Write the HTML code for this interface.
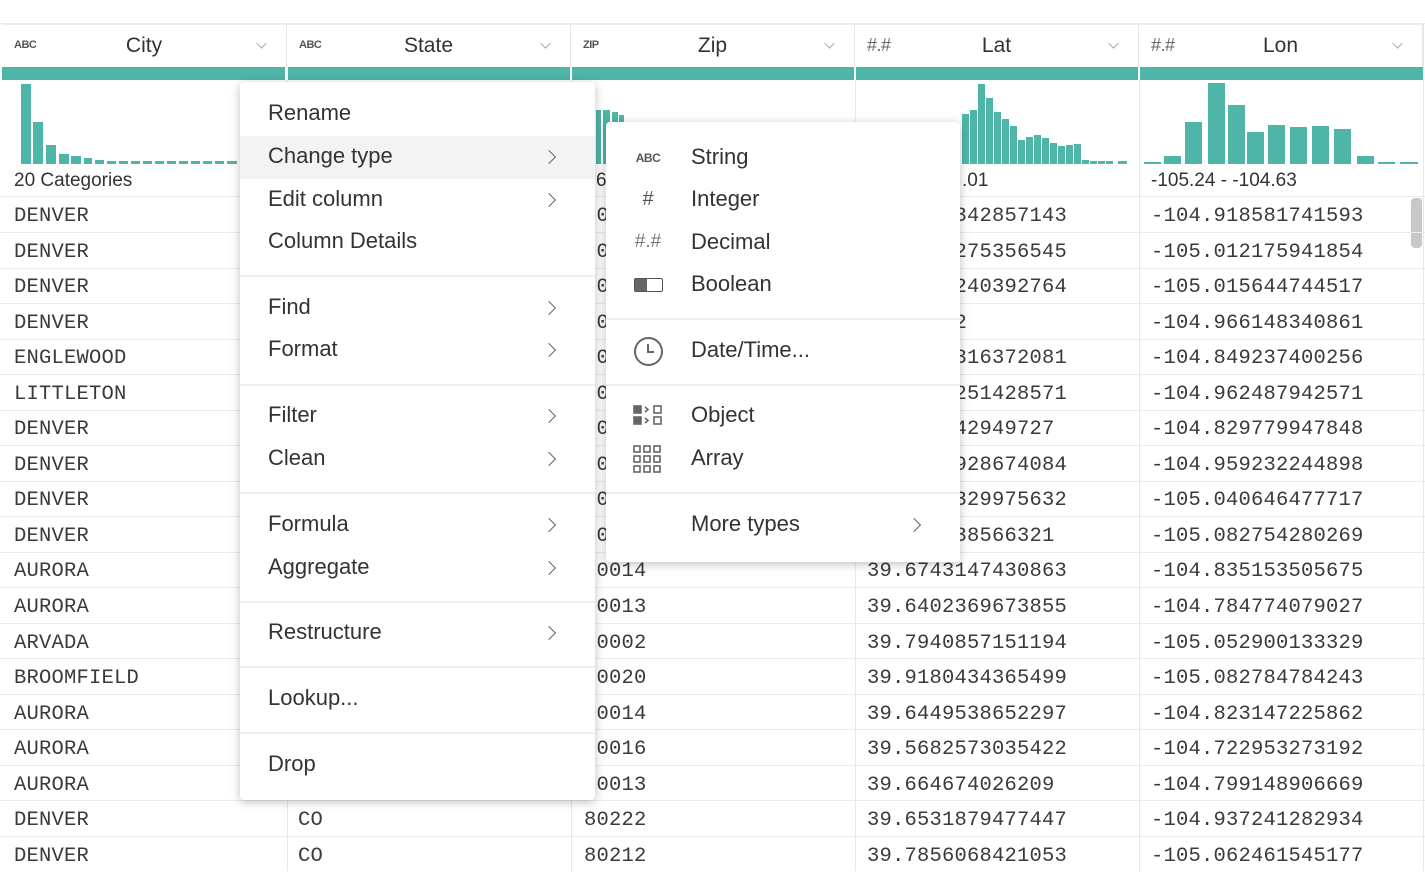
<!DOCTYPE html>
<html><head><meta charset="utf-8"><style>
*{margin:0;padding:0;box-sizing:border-box}
body{width:1425px;height:871px;overflow:hidden;background:#fff;font-family:"Liberation Sans",sans-serif;color:#333;position:relative}
.a{position:absolute}
.hd{position:absolute;top:24px;height:43px;border-right:1px solid #e6e6e6;border-top:1px solid #eee}
.hd .t{position:absolute;left:12px;top:14px;font-size:11px;font-weight:bold;color:#555;letter-spacing:-0.5px}
.hd .n{position:absolute;left:0;right:0;text-align:center;top:9px;font-size:21px;color:#333}
.hd .c{position:absolute;right:20px;top:14px;width:9px;height:9px;border-right:1.5px solid #999;border-bottom:1.5px solid #999;transform:rotate(45deg) scale(0.8,0.8)}
.bar{position:absolute;top:67px;height:13px;background:#4fb5a9}
.vl{position:absolute;top:80px;bottom:0;width:1px;background:#e8e8e8}
.hl{position:absolute;left:0;width:1425px;height:1px;background:#ececec}
.cell{position:absolute;font-family:"Liberation Mono",monospace;font-size:20.5px;color:#3a3a3a;white-space:pre;letter-spacing:0.2px}
.menu{position:absolute;background:#fff;border-radius:4px;box-shadow:0 2px 10px rgba(0,0,0,0.25)}
.mi{position:absolute;left:28px;font-size:22px;color:#333;white-space:nowrap}
.chev{position:absolute;width:10px;height:10px;border-right:1.6px solid #666;border-top:1.6px solid #666;transform:rotate(45deg)}
.sep{position:absolute;left:0;right:0;height:2px;background:#eee}
.ic{position:absolute;color:#555;text-align:center;width:40px}
</style></head><body>
<div class="a" style="left:0;top:0;width:1425px;height:24px;background:#fff;border-bottom:1px solid #eee"></div>

<div class="hd" style="left:2px;width:285px"><span class="t">ABC</span><span class="n">City</span><span class="c"></span></div>
<div class="hd" style="left:287px;width:284px"><span class="t">ABC</span><span class="n">State</span><span class="c"></span></div>
<div class="hd" style="left:571px;width:284px"><span class="t">ZIP</span><span class="n">Zip</span><span class="c"></span></div>
<div class="hd" style="left:855px;width:284px"><span class="t" style="font-size:18px;font-weight:normal;top:10px;color:#666">#.#</span><span class="n">Lat</span><span class="c"></span></div>
<div class="hd" style="left:1139px;width:284px"><span class="t" style="font-size:18px;font-weight:normal;top:10px;color:#666">#.#</span><span class="n">Lon</span><span class="c"></span></div>
<div class="bar" style="left:2px;width:283px"></div>
<div class="bar" style="left:288px;width:282px"></div>
<div class="bar" style="left:572px;width:282px"></div>
<div class="bar" style="left:856px;width:282px"></div>
<div class="bar" style="left:1140px;width:283px"></div>

<div class="vl" style="left:287px"></div><div class="vl" style="left:571px"></div><div class="vl" style="left:855px"></div><div class="vl" style="left:1139px"></div><div class="vl" style="left:1423px;top:24px"></div>

<svg class="a" style="left:0;top:80px" width="1425" height="90">
<g fill="#4fb5a9">
<rect x="21" y="4" width="10" height="80"/><rect x="33" y="42" width="10" height="42"/><rect x="46" y="65" width="10" height="19"/><rect x="59" y="74" width="10" height="10"/><rect x="71" y="76" width="10" height="8"/><rect x="84" y="78" width="8" height="6"/>
<rect x="95" y="80" width="9" height="4"/><rect x="107" y="81" width="9" height="3"/><rect x="119" y="81" width="9" height="3"/><rect x="131" y="81" width="9" height="3"/><rect x="143" y="81" width="9" height="3"/><rect x="155" y="81" width="9" height="3"/><rect x="167" y="81" width="9" height="3"/><rect x="179" y="81" width="9" height="3"/><rect x="191" y="81" width="9" height="3"/><rect x="203" y="81" width="9" height="3"/><rect x="215" y="81" width="9" height="3"/><rect x="227" y="81" width="10" height="3"/>
<rect x="596" y="30" width="5" height="54"/><rect x="603" y="30" width="7" height="54"/><rect x="612" y="32" width="6" height="10"/><rect x="619" y="35" width="5" height="7"/>
<rect x="962" y="34" width="7" height="50"/><rect x="970" y="30" width="7" height="54"/><rect x="978" y="4" width="7" height="80"/><rect x="986" y="18" width="7" height="66"/><rect x="994" y="32" width="7" height="52"/><rect x="1002" y="39" width="7" height="45"/><rect x="1010" y="46" width="7" height="38"/><rect x="1018" y="60" width="7" height="24"/><rect x="1026" y="57" width="7" height="27"/><rect x="1034" y="55" width="7" height="29"/><rect x="1042" y="58" width="7" height="26"/><rect x="1050" y="63" width="7" height="21"/><rect x="1058" y="66" width="7" height="18"/><rect x="1066" y="65" width="7" height="19"/><rect x="1074" y="64" width="7" height="20"/><rect x="1082" y="80" width="7" height="4"/><rect x="1090" y="81" width="7" height="3"/><rect x="1098" y="81" width="7" height="3"/><rect x="1106" y="81" width="7" height="3"/><rect x="1118" y="81" width="9" height="3"/>
<rect x="1144" y="82" width="17" height="2"/><rect x="1164" y="76" width="17" height="8"/><rect x="1185" y="42" width="17" height="42"/><rect x="1208" y="3" width="17" height="81"/><rect x="1228" y="25" width="17" height="59"/><rect x="1247" y="52" width="17" height="32"/><rect x="1268" y="45" width="17" height="39"/><rect x="1290" y="47" width="17" height="37"/><rect x="1312" y="46" width="17" height="38"/><rect x="1334" y="49" width="17" height="35"/><rect x="1357" y="76" width="17" height="8"/><rect x="1378" y="82" width="17" height="2"/><rect x="1400" y="82" width="18" height="2"/>
</g></svg>
<div class="a" style="left:14px;top:170px;font-size:19px;color:#333">20 Categories</div>
<div class="a" style="left:596px;top:170px;font-size:19px;color:#333">6</div>
<div class="a" style="left:962px;top:170px;font-size:19px;color:#333">.01</div>
<div class="a" style="left:1151px;top:170px;font-size:19px;color:#333">-105.24 - -104.63</div>

<div class="hl" style="top:196px"></div>
<div class="a" style="left:1411px;top:198px;width:11px;height:50px;background:#c8c8c8;border-radius:4px"></div>

<div class="cell" style="left:14px;top:199px;line-height:35.55px">DENVER
DENVER
DENVER
DENVER
ENGLEWOOD
LITTLETON
DENVER
DENVER
DENVER
DENVER
AURORA
AURORA
ARVADA
BROOMFIELD
AURORA
AURORA
AURORA
DENVER
DENVER</div>
<div class="cell" style="left:298px;top:199px;line-height:35.55px">CO
CO
CO
CO
CO
CO
CO
CO
CO
CO
CO
CO
CO
CO
CO
CO
CO
CO
CO</div>
<div class="cell" style="left:584px;top:199px;line-height:35.55px">80206
80205
80203
80209
80112
80120
80206
80204
80209
80203
80014
80013
80002
80020
80014
80016
80013
80222
80212</div>
<div class="cell" style="left:867px;top:199px;line-height:35.55px">39.7213342857143
39.7122275356545
39.7183240392764
39.73622
39.5816316372081
39.6123251428571
39.673542949727
39.7399928674084
39.7088329975632
39.756638566321
39.6743147430863
39.6402369673855
39.7940857151194
39.9180434365499
39.6449538652297
39.5682573035422
39.664674026209
39.6531879477447
39.7856068421053</div>
<div class="cell" style="left:1151px;top:199px;line-height:35.55px">-104.918581741593
-105.012175941854
-105.015644744517
-104.966148340861
-104.849237400256
-104.962487942571
-104.829779947848
-104.959232244898
-105.040646477717
-105.082754280269
-104.835153505675
-104.784774079027
-105.052900133329
-105.082784784243
-104.823147225862
-104.722953273192
-104.799148906669
-104.937241282934
-105.062461545177</div>
<div class="hl" style="top:232px"></div><div class="hl" style="top:268px"></div><div class="hl" style="top:303px"></div><div class="hl" style="top:339px"></div><div class="hl" style="top:374px"></div><div class="hl" style="top:410px"></div><div class="hl" style="top:445px"></div><div class="hl" style="top:481px"></div><div class="hl" style="top:516px"></div><div class="hl" style="top:552px"></div><div class="hl" style="top:587px"></div><div class="hl" style="top:623px"></div><div class="hl" style="top:658px"></div><div class="hl" style="top:694px"></div><div class="hl" style="top:729px"></div><div class="hl" style="top:765px"></div><div class="hl" style="top:800px"></div><div class="hl" style="top:836px"></div>

<div class="menu" style="left:240px;top:82px;width:355px;height:718px">
<div class="a" style="left:0;top:54px;width:355px;height:43px;background:#f3f3f3"></div>
<div class="mi" style="top:18px">Rename</div>
<div class="mi" style="top:61px">Change type</div><div class="chev" style="left:304px;top:70px"></div>
<div class="mi" style="top:104px">Edit column</div><div class="chev" style="left:304px;top:113px"></div>
<div class="mi" style="top:146px">Column Details</div>
<div class="sep" style="top:193px"></div>
<div class="mi" style="top:212px">Find</div><div class="chev" style="left:304px;top:221px"></div>
<div class="mi" style="top:254px">Format</div><div class="chev" style="left:304px;top:263px"></div>
<div class="sep" style="top:302px"></div>
<div class="mi" style="top:320px">Filter</div><div class="chev" style="left:304px;top:329px"></div>
<div class="mi" style="top:363px">Clean</div><div class="chev" style="left:304px;top:372px"></div>
<div class="sep" style="top:410px"></div>
<div class="mi" style="top:429px">Formula</div><div class="chev" style="left:304px;top:438px"></div>
<div class="mi" style="top:472px">Aggregate</div><div class="chev" style="left:304px;top:481px"></div>
<div class="sep" style="top:519px"></div>
<div class="mi" style="top:537px">Restructure</div><div class="chev" style="left:304px;top:546px"></div>
<div class="sep" style="top:584px"></div>
<div class="mi" style="top:603px">Lookup...</div>
<div class="sep" style="top:650px"></div>
<div class="mi" style="top:669px">Drop</div>
</div>

<div class="menu" style="left:606px;top:122px;width:354px;height:440px">
<div class="ic" style="left:22px;top:29px;font-size:12px;font-weight:bold;letter-spacing:-0.5px">ABC</div>
<div class="mi" style="left:85px;top:22px">String</div>
<div class="ic" style="left:22px;top:66px;font-size:20px">#</div>
<div class="mi" style="left:85px;top:64px">Integer</div>
<div class="ic" style="left:22px;top:109px;font-size:19px;color:#777">#.#</div>
<div class="mi" style="left:85px;top:107px">Decimal</div>
<div class="a" style="left:28px;top:156px;width:29px;height:14px;border:1.5px solid #555;border-radius:2px"><div style="width:12px;height:100%;background:#666"></div></div>
<div class="mi" style="left:85px;top:149px">Boolean</div>
<div class="sep" style="top:196px"></div>
<div class="a" style="left:28px;top:215px;width:29px;height:29px;border:2px solid #666;border-radius:50%"><div style="position:absolute;left:11px;top:5px;width:7px;height:9px;border-left:2px solid #666;border-bottom:2px solid #666"></div></div>
<div class="mi" style="left:85px;top:215px">Date/Time...</div>
<div class="sep" style="top:262px"></div>
<svg class="a" style="left:27px;top:283px" width="32" height="70" fill="none" stroke="#666" stroke-width="1.6">
<rect x="1" y="1" width="7" height="7" fill="#666"/><rect x="1" y="12" width="7" height="7" fill="#666"/><path d="M12 2l3 2.5-3 2.5M12 13l3 2.5-3 2.5"/><rect x="21" y="1" width="7" height="7"/><rect x="21" y="12" width="7" height="7"/>
<rect x="1" y="41" width="6" height="6"/><rect x="11" y="41" width="6" height="6"/><rect x="21" y="41" width="6" height="6"/><rect x="1" y="51" width="6" height="6"/><rect x="11" y="51" width="6" height="6"/><rect x="21" y="51" width="6" height="6"/><rect x="1" y="61" width="6" height="6"/><rect x="11" y="61" width="6" height="6"/><rect x="21" y="61" width="6" height="6"/>
</svg>
<div class="mi" style="left:85px;top:280px">Object</div>
<div class="mi" style="left:85px;top:323px">Array</div>
<div class="sep" style="top:370px"></div>
<div class="mi" style="left:85px;top:389px">More types</div><div class="chev" style="left:303px;top:398px"></div>
</div>
</body></html>
